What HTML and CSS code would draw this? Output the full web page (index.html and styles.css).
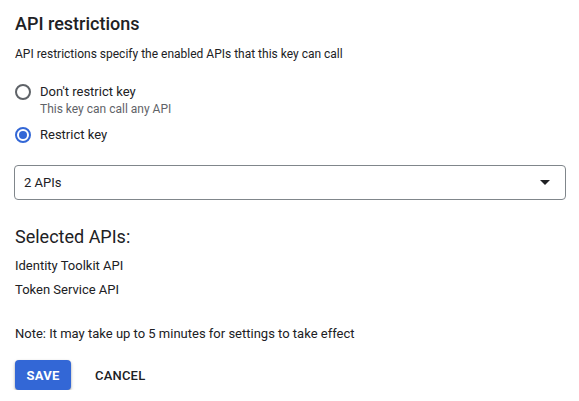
FILE: index.html
```html
<!DOCTYPE html>
<html>
<head>
<meta charset="utf-8">
<link rel="stylesheet" href="styles.css">
</head>
<body>
<main class="panel">
  <h2 class="title">API restrictions</h2>
  <p class="desc">API restrictions specify the enabled APIs that this key can call</p>
  <div class="radios">
    <label class="radio">
      <span class="circle"></span>
      <span class="rtext">
        <span class="rlabel">Don't restrict key</span>
        <span class="rhint">This key can call any API</span>
      </span>
    </label>
    <label class="radio checked">
      <span class="circle"><span class="dot"></span></span>
      <span class="rtext"><span class="rlabel">Restrict key</span></span>
    </label>
  </div>
  <div class="select">
    <span class="value">2 APIs</span>
    <svg class="arrow" width="10" height="5" viewBox="0 0 10 5"><path d="M0 0h10L5 5z" fill="#202124"/></svg>
  </div>
  <h3 class="subtitle">Selected APIs:</h3>
  <ul class="apis">
    <li>Identity Toolkit API</li>
    <li>Token Service API</li>
  </ul>
  <p class="note">Note: It may take up to 5 minutes for settings to take effect</p>
  <div class="actions">
    <button class="btn primary">SAVE</button>
    <button class="btn flat">CANCEL</button>
  </div>
</main>
</body>
</html>
```
FILE: styles.css
```css
* { box-sizing: border-box; }
body {
  margin: 0;
  background: #fff;
  font-family: Roboto, "Noto Sans", Arial, sans-serif;
  color: #202124;
}
.panel {
  padding: 12px 13px 0 15px;
  width: 579px;
}
.title {
  margin: 0;
  font-size: 18px;
  font-weight: 500;
  line-height: 24px;
  color: #202124;
}
.desc {
  margin: 8px 0 0;
  font-size: 12px;
  line-height: 20px;
  color: #202124;
}
.radios {
  margin-top: 18px;
  display: flex;
  flex-direction: column;
  gap: 9px;
}
.radio {
  display: flex;
  align-items: flex-start;
  gap: 9px;
}
.circle {
  width: 16px;
  height: 16px;
  border-radius: 50%;
  border: 2px solid #5f6368;
  margin-top: 2px;
  display: flex;
  align-items: center;
  justify-content: center;
  flex: none;
}
.radio.checked .circle { border-color: #3367d6; }
.dot {
  width: 8px;
  height: 8px;
  border-radius: 50%;
  background: #3367d6;
}
.rtext {
  display: flex;
  flex-direction: column;
}
.rlabel {
  font-size: 13px;
  line-height: 20px;
  color: #202124;
}
.rhint {
  font-size: 12px;
  line-height: 14px;
  color: #5f6368;
}
.select {
  margin-top: 20px;
  height: 35px;
  width: 552px;
  margin-left: -1px;
  border: 1px solid #80868b;
  border-radius: 4px;
  display: flex;
  align-items: center;
  justify-content: space-between;
  padding: 0 15px 0 9px;
}
.value {
  font-size: 13px;
  color: #202124;
}
.arrow { display: block; }
.subtitle {
  margin: 25px 0 0;
  font-size: 18px;
  font-weight: 400;
  line-height: 24px;
  color: #202124;
}
.apis {
  list-style: none;
  margin: 7px 0 0;
  padding: 0;
  display: flex;
  flex-direction: column;
  gap: 4px;
}
.apis li {
  font-size: 13px;
  line-height: 20px;
  color: #202124;
}
.note {
  margin: 24px 0 0;
  font-size: 13px;
  line-height: 20px;
  color: #202124;
}
.actions {
  margin-top: 16px;
  display: flex;
  align-items: center;
  gap: 8px;
}
.btn {
  font-family: Roboto, Arial, sans-serif;
  font-size: 13px;
  font-weight: 500;
  letter-spacing: 0.2px;
  height: 30px;
  border: none;
  border-radius: 4px;
  padding: 0 12px;
  cursor: pointer;
}
.primary {
  background: #3367d6;
  color: #fff;
  font-weight: 700;
  width: 56px;
  padding: 0;
  box-shadow: 0 1px 2px rgba(0,0,0,.3), 0 2px 4px rgba(0,0,0,.15);
}
.flat {
  background: transparent;
  color: #202124;
  padding: 0 16px;
}
```
